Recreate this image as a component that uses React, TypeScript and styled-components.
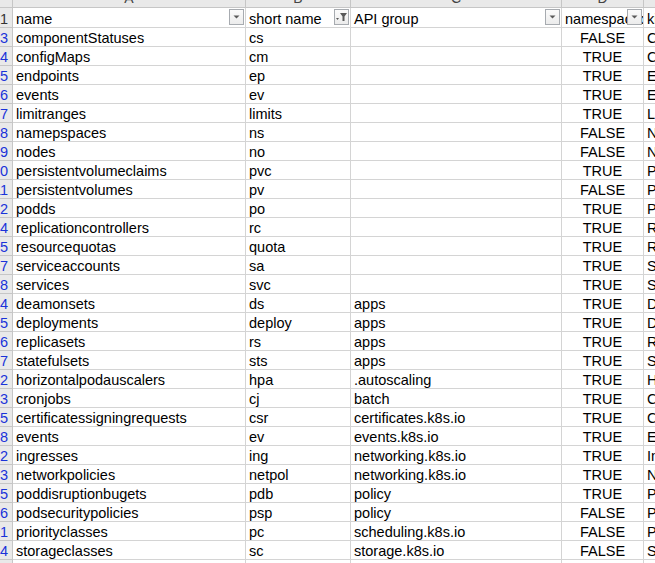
import React from 'react';
import styled, { createGlobalStyle } from 'styled-components';

const GlobalStyle = createGlobalStyle`
    html, body {
        margin: 0;
        padding: 0;
        background: #ffffff;
        overflow: hidden;
    }
`;

const GRID_LINE = '#d4d4d4';
const HEAD_LINE = '#c6c6c6';

const Sheet = styled.div`
    width: 655px;
    height: 563px;
    overflow: hidden;
    font-family: "Liberation Sans", "Noto Sans CJK SC", sans-serif;
    font-size: 14.5px;
    color: #000;
`;

// first row is the column letters (mostly scrolled off), second is the filter header
const Grid = styled.div`
    display: grid;
    grid-template-columns: 13px 233px 105px 211px 82px 110px;
    grid-template-rows: 20px 20px;
    grid-auto-rows: 19px;
    margin-top: -12px;
    width: max-content;
`;

const ColHead = styled.div`
    box-sizing: border-box;
    background: #e9e9e9;
    border-right: 1px solid ${HEAD_LINE};
    border-bottom: 1px solid ${HEAD_LINE};
    display: flex;
    align-items: center;
    justify-content: center;
    color: #444;
    font-size: 14px;
`;

const RowHead = styled.div<{ $filtered?: boolean }>`
    box-sizing: border-box;
    background: #e9e9e9;
    border-right: 1px solid ${HEAD_LINE};
    border-bottom: 1px solid ${HEAD_LINE};
    display: flex;
    align-items: center;
    justify-content: flex-end;
    overflow: hidden;
    padding: 2px 4px 0 0;
    color: ${p => (p.$filtered ? '#1a33d9' : '#333')};
    white-space: nowrap;
`;

const Cell = styled.div<{ $align?: 'left' | 'center' }>`
    position: relative;
    box-sizing: border-box;
    border-right: 1px solid ${GRID_LINE};
    border-bottom: 1px solid ${GRID_LINE};
    padding: 2px 3px 0;
    display: flex;
    align-items: center;
    justify-content: ${p => (p.$align === 'center' ? 'center' : 'flex-start')};
    white-space: nowrap;
    overflow: hidden;
    line-height: 16px;
`;

const FilterButton = styled.div`
    position: absolute;
    right: 1px;
    top: 1px;
    width: 15px;
    height: 16px;
    box-sizing: border-box;
    border: 1px solid #a7abb0;
    background: linear-gradient(#fbfbfb, #ececec);
    display: flex;
    align-items: center;
    justify-content: center;
`;

const DropIcon = () => (
    <svg width="9" height="6" viewBox="0 0 9 6">
        <path d="M1.5 1.5 H7.5 L4.5 4.5 Z" fill="#5a5a5a" />
    </svg>
);

const FunnelIcon = () => (
    <svg width="13" height="12" viewBox="0 0 13 12">
        <path d="M1 7 H4 L2.5 9 Z" fill="#5a5a5a" />
        <path d="M5 2 H12 L9.5 5.5 V10 H7.5 V5.5 Z" fill="#5a5a5a" />
    </svg>
);

type Resource = {
    row: number;
    name: string;
    short: string;
    group: string;
    namespaced: boolean;
    kind: string;
};

const resources: Resource[] = [
    { row: 3, name: 'componentStatuses', short: 'cs', group: '', namespaced: false, kind: 'ComponentStatus' },
    { row: 4, name: 'configMaps', short: 'cm', group: '', namespaced: true, kind: 'ConfigMap' },
    { row: 5, name: 'endpoints', short: 'ep', group: '', namespaced: true, kind: 'Endpoints' },
    { row: 6, name: 'events', short: 'ev', group: '', namespaced: true, kind: 'Event' },
    { row: 7, name: 'limitranges', short: 'limits', group: '', namespaced: true, kind: 'LimitRange' },
    { row: 8, name: 'namepspaces', short: 'ns', group: '', namespaced: false, kind: 'Namespace' },
    { row: 9, name: 'nodes', short: 'no', group: '', namespaced: false, kind: 'Node' },
    { row: 10, name: 'persistentvolumeclaims', short: 'pvc', group: '', namespaced: true, kind: 'PersistentVolumeClaim' },
    { row: 11, name: 'persistentvolumes', short: 'pv', group: '', namespaced: false, kind: 'PersistentVolume' },
    { row: 12, name: 'podds', short: 'po', group: '', namespaced: true, kind: 'Pod' },
    { row: 14, name: 'replicationcontrollers', short: 'rc', group: '', namespaced: true, kind: 'ReplicationController' },
    { row: 15, name: 'resourcequotas', short: 'quota', group: '', namespaced: true, kind: 'ResourceQuota' },
    { row: 17, name: 'serviceaccounts', short: 'sa', group: '', namespaced: true, kind: 'ServiceAccount' },
    { row: 18, name: 'services', short: 'svc', group: '', namespaced: true, kind: 'Service' },
    { row: 24, name: 'deamonsets', short: 'ds', group: 'apps', namespaced: true, kind: 'DaemonSet' },
    { row: 25, name: 'deployments', short: 'deploy', group: 'apps', namespaced: true, kind: 'Deployment' },
    { row: 26, name: 'replicasets', short: 'rs', group: 'apps', namespaced: true, kind: 'ReplicaSet' },
    { row: 27, name: 'statefulsets', short: 'sts', group: 'apps', namespaced: true, kind: 'StatefulSet' },
    { row: 32, name: 'horizontalpodauscalers', short: 'hpa', group: '.autoscaling', namespaced: true, kind: 'HorizontalPodAutoscaler' },
    { row: 33, name: 'cronjobs', short: 'cj', group: 'batch', namespaced: true, kind: 'CronJob' },
    { row: 35, name: 'certificatessigningrequests', short: 'csr', group: 'certificates.k8s.io', namespaced: true, kind: 'CertificateSigningRequest' },
    { row: 38, name: 'events', short: 'ev', group: 'events.k8s.io', namespaced: true, kind: 'Event' },
    { row: 42, name: 'ingresses', short: 'ing', group: 'networking.k8s.io', namespaced: true, kind: 'Ingress' },
    { row: 43, name: 'networkpolicies', short: 'netpol', group: 'networking.k8s.io', namespaced: true, kind: 'NetworkPolicy' },
    { row: 45, name: 'poddisruptionbugets', short: 'pdb', group: 'policy', namespaced: true, kind: 'PodDisruptionBudget' },
    { row: 46, name: 'podsecuritypolicies', short: 'psp', group: 'policy', namespaced: false, kind: 'PodSecurityPolicy' },
    { row: 51, name: 'priorityclasses', short: 'pc', group: 'scheduling.k8s.io', namespaced: false, kind: 'PriorityClass' },
    { row: 54, name: 'storageclasses', short: 'sc', group: 'storage.k8s.io', namespaced: false, kind: 'StorageClass' },
];

const columns = ['A', 'B', 'C', 'D', 'E'];

export default function App() {
    return (
        <Sheet>
            <GlobalStyle />
            <Grid>
                <ColHead />
                {columns.map(c => (
                    <ColHead key={c}>{c}</ColHead>
                ))}

                <RowHead>1</RowHead>
                <Cell>
                    name
                    <FilterButton><DropIcon /></FilterButton>
                </Cell>
                <Cell>
                    short name
                    <FilterButton><FunnelIcon /></FilterButton>
                </Cell>
                <Cell>
                    API group
                    <FilterButton><DropIcon /></FilterButton>
                </Cell>
                <Cell>
                    namespaced
                    <FilterButton><DropIcon /></FilterButton>
                </Cell>
                <Cell>kind</Cell>

                {resources.map(r => (
                    <React.Fragment key={r.row}>
                        <RowHead $filtered>{r.row}</RowHead>
                        <Cell>{r.name}</Cell>
                        <Cell>{r.short}</Cell>
                        <Cell>{r.group}</Cell>
                        <Cell $align="center">{r.namespaced ? 'TRUE' : 'FALSE'}</Cell>
                        <Cell>{r.kind}</Cell>
                    </React.Fragment>
                ))}

                <RowHead $filtered>55</RowHead>
                <Cell />
                <Cell />
                <Cell />
                <Cell />
                <Cell />
            </Grid>
        </Sheet>
    );
}
